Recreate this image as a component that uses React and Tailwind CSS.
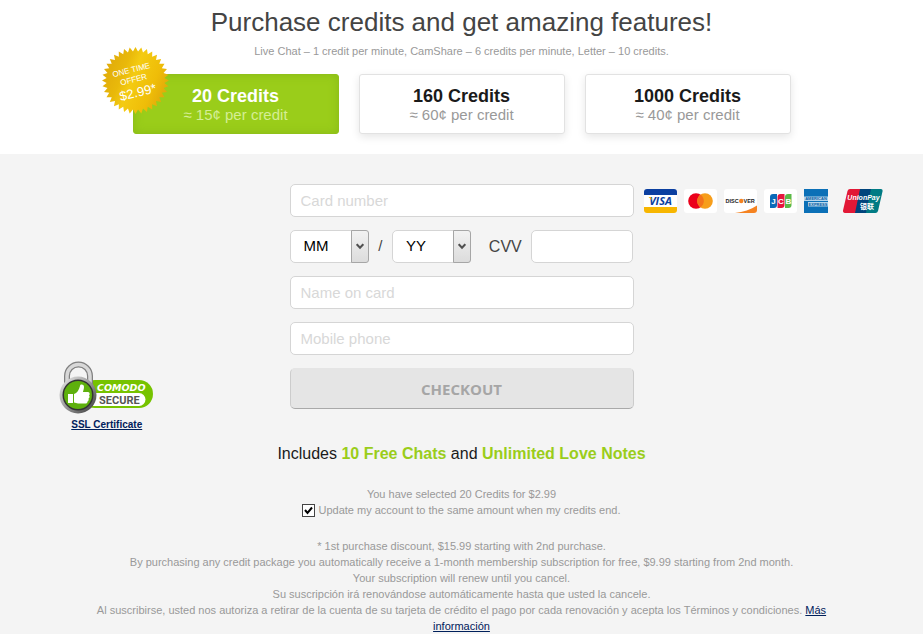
import React, { useState } from "react";

const plans = [
  { id: "20", title: "20 Credits", price: "≈ 15¢ per credit" },
  { id: "160", title: "160 Credits", price: "≈ 60¢ per credit" },
  { id: "1000", title: "1000 Credits", price: "≈ 40¢ per credit" },
];

const months = ["01", "02", "03", "04", "05", "06", "07", "08", "09", "10", "11", "12"];
const years = ["24", "25", "26", "27", "28", "29", "30"];

// serrated outline of the offer seal
const sealPoints = Array.from({ length: 72 }, (_, i) => {
  const r = i % 2 === 0 ? 33.5 : 29;
  const a = (i * Math.PI) / 36;
  return `${(33.5 + r * Math.cos(a)).toFixed(2)},${(33.5 + r * Math.sin(a)).toFixed(2)}`;
}).join(" ");

function OfferSeal() {
  return (
    <svg
      className="absolute -left-[31px] -top-[27px] h-[67px] w-[67px]"
      viewBox="0 0 67 67"
      fill="#fff"
      textAnchor="middle"
      fontFamily="'Liberation Sans', Arial, sans-serif"
    >
      <defs>
        <linearGradient id="gold" x1="0" y1="0.3" x2="1" y2="0.7">
          <stop offset="0" stopColor="#dfa90a" />
          <stop offset="0.3" stopColor="#e9b90a" />
          <stop offset="0.45" stopColor="#f4cb12" />
          <stop offset="0.75" stopColor="#efbd08" />
          <stop offset="1" stopColor="#dda50a" />
        </linearGradient>
      </defs>
      <polygon points={sealPoints} fill="url(#gold)" />
      <g transform="rotate(-14 33 34)">
        <text x="32" y="25" fontSize="8">ONE TIME</text>
        <text x="32" y="35" fontSize="8">OFFER</text>
        <text x="33" y="50" fontSize="13">$2.99*</text>
      </g>
    </svg>
  );
}

function PlanCard({ plan, selected, onSelect, children }) {
  return (
    <div className="relative flex-1">
      <button
        type="button"
        aria-pressed={selected}
        onClick={onSelect}
        className={
          selected
            ? "flex h-[60px] w-full flex-col items-center justify-center rounded-[3px] border border-[#90c11a] bg-[#9acd1a] pt-[2px] shadow-[inset_0_0_10px_#8bbd17]"
            : "flex h-[60px] w-full flex-col items-center justify-center rounded-[3px] border border-[#e2e2e2] bg-white pt-[2px] shadow-[0_3px_8px_#0000001a]"
        }
      >
        <span className={selected ? "text-[18px] leading-5 font-bold text-white" : "text-[18px] leading-5 font-bold text-[#1a1a1a]"}>
          {plan.title}
        </span>
        <span className={selected ? "text-[15px] leading-[18px] text-[#d5ee95]" : "text-[15px] leading-[18px] text-[#999]"}>
          {plan.price}
        </span>
      </button>
      {children}
    </div>
  );
}

function DateSelect({ label, short, options }) {
  return (
    <div className="relative h-[33px] w-[79px]">
      <select
        aria-label={label}
        defaultValue=""
        className="h-full w-full appearance-none rounded-[5px] border border-[#d5d5d5] bg-white pl-[13px] text-[15px] text-black"
      >
        <option value="">{short}</option>
        {options.map((o) => (
          <option key={o} value={o}>{o}</option>
        ))}
      </select>
      <span className="pointer-events-none absolute inset-y-0 right-0 flex w-[18px] items-center justify-center rounded-r-[3px] border border-[#a6a6a6] bg-linear-to-b from-[#f2f2f2] to-[#dcdcdc]">
        <svg width="8" height="7" viewBox="0 0 8 7" fill="none" stroke="#505050" strokeWidth="2">
          <path d="M.7 1.2 4 4.7 7.300 1.2" />
        </svg>
      </span>
    </div>
  );
}

function TextField({ label }) {
  return (
    <input
      type="text"
      aria-label={label}
      placeholder={label}
      className="h-[33px] w-full rounded-[5px] border border-[#d5d5d5] bg-white px-[10px] text-[15px] text-[#444] placeholder:text-[#d8d8d8]"
    />
  );
}

function CardLogos() {
  return (
    <div className="flex items-center gap-[7px]">
      <svg width="33" height="24" viewBox="0 0 33 24" role="img" aria-label="Visa">
        <rect width="33" height="24" rx="3" fill="#fff" />
        <path d="M3 0h27a3 3 0 0 1 3 3v3H0V3a3 3 0 0 1 3-3Z" fill="#0b3fa0" />
        <path d="M0 18h33v3a3 3 0 0 1-3 3H3a3 3 0 0 1-3-3Z" fill="#f7b600" />
        <text x="16.5" y="16" textAnchor="middle" fontSize="11" fontWeight="bold" fontStyle="italic" fontFamily="'Open Sans', sans-serif" fill="#0b3fa0">VISA</text>
        <path d="M4.500 8h2.500l1 3z" fill="#f7b600" />
      </svg>
      <svg width="33" height="24" viewBox="0 0 33 24" role="img" aria-label="Mastercard">
        <rect width="33" height="24" rx="3" fill="#fff" />
        <circle cx="12" cy="12" r="7.8" fill="#eb001b" />
        <circle cx="21" cy="12" r="7.8" fill="#f79e1b" />
        <path d="M16.5 5.6a7.8 7.8 0 0 1 0 12.8 7.8 7.8 0 0 1 0-12.8Z" fill="#f4731c" />
      </svg>
      <svg width="33" height="24" viewBox="0 0 33 24" role="img" aria-label="Discover">
        <rect width="33" height="24" rx="3" fill="#fff" />
        <path d="M11 24c8-1 16-3.500 22-7.500V21a3 3 0 0 1-3 3Z" fill="#f58220" />
        <g fontSize="5.500" fontWeight="bold" fontFamily="'Liberation Sans', sans-serif" fill="#222">
          <text x="1.500" y="14">DISC</text>
          <text x="19.500" y="14">VER</text>
        </g>
        <circle cx="17.200" cy="12" r="2.200" fill="#f58220" />
      </svg>
      <svg width="33" height="24" viewBox="0 0 33 24" role="img" aria-label="JCB">
        <rect width="33" height="24" rx="3" fill="#fff" />
        <path d="M9 5h4v11a3 3 0 0 1-3 3H6V8a3 3 0 0 1 3-3Z" fill="#0b6ab8" />
        <path d="M16.500 5h4v11a3 3 0 0 1-3 3h-4V8a3 3 0 0 1 3-3Z" fill="#e4173e" />
        <path d="M24 5h3.500v11a3 3 0 0 1-3 3H21V8a3 3 0 0 1 3-3Z" fill="#5bb947" />
        <g fontSize="8" fontWeight="bold" fontFamily="'Liberation Sans', sans-serif" fill="#fff" textAnchor="middle">
          <text x="9.500" y="15">J</text>
          <text x="17" y="15">C</text>
          <text x="24.500" y="15">B</text>
        </g>
      </svg>
      <svg width="24" height="24" viewBox="0 0 24 24" role="img" aria-label="American Express">
        <rect width="24" height="24" fill="#0b70b7" />
        <path d="M0 7.500h24v4.500H0zM4 13h20v4.500H4z" fill="#b5d6ec" />
        <g fontSize="4" fontWeight="bold" fontFamily="'Liberation Sans', sans-serif" fill="#0b5fa5" textAnchor="middle">
          <text x="12" y="11.200">AMERICAN</text>
          <text x="14" y="16.700">EXPRESS</text>
        </g>
      </svg>
      <svg className="ml-2" width="40" height="24" viewBox="0 0 40 24" role="img" aria-label="UnionPay">
        <path d="M7 0h12l-5 24H2a2 2 0 0 1-2-2.500L4.500 2A3 3 0 0 1 7 0Z" fill="#e21836" />
        <path d="M17 0h12l-5 24H12Z" fill="#00447c" />
        <path d="M28 0h10a2 2 0 0 1 1.500 2.500L35 22a3 3 0 0 1-2.500 2H23Z" fill="#007b84" />
        <g fill="#fff" textAnchor="middle" fontWeight="bold">
          <text x="20.500" y="11" fontSize="7" fontStyle="italic" fontFamily="'Liberation Sans', sans-serif">UnionPay</text>
          <text x="24" y="20" fontSize="7" fontFamily="'Noto Sans CJK SC', sans-serif">银联</text>
        </g>
      </svg>
    </div>
  );
}

function ComodoBadge() {
  return (
    <svg width="96" height="54" viewBox="0 0 96 54" role="img" aria-label="Comodo Secure">
      <defs>
        <linearGradient id="steel" x1="0" y1="0" x2="1" y2="1">
          <stop offset="0" stopColor="#eee" />
          <stop offset="0.5" stopColor="#999" />
          <stop offset="1" stopColor="#333" />
        </linearGradient>
      </defs>
      <rect x="22" y="19" width="72" height="28" rx="14" fill="#76c300" />
      <path d="M34 32h46a6.500 6.500 0 0 1 0 13H34Z" fill="#fff" />
      <path d="M8 26V15a11.500 11.500 0 0 1 23 0v11" fill="none" stroke="#808080" strokeWidth="6" />
      <path d="M8 26V15a11.500 11.500 0 0 1 23 0v11" fill="none" stroke="#d8d8d8" strokeWidth="3.500" />
      <circle cx="19" cy="34" r="18.500" fill="url(#steel)" />
      <circle cx="19" cy="34" r="15.500" fill="#333" />
      <circle cx="19" cy="34" r="14" fill="#5eb00c" />
      <path d="M9 33h5v9H9ZM15 33c3-1 5-4 6-8 0-2 4-2 4 1 0 2-1 4-1 5h5c2 0 2 3 1 3.500 1 1 .5 2.500-.5 3 .5 1 0 2.500-1 3 0 1.500-1 2-2 2H19l-4-1Z" fill="#fff" />
      <text x="38" y="29.500" fontSize="9.500" fontWeight="bold" fontStyle="italic" fontFamily="'DejaVu Sans', sans-serif" fill="#fff">COMODO</text>
      <text x="40" y="42.500" fontSize="11" fontWeight="bold" fontFamily="'Roboto', sans-serif" fill="#555">SECURE</text>
    </svg>
  );
}

export default function App() {
  const [selected, setSelected] = useState("20");
  const [autoUpdate, setAutoUpdate] = useState(true);

  return (
    <div className="min-h-screen bg-[#f4f4f4] font-['Liberation_Sans',Arial,sans-serif]">
      <header className="bg-white px-4 pt-[6px] pb-5 text-center">
        <h1 className="text-[26px] leading-8 text-[#444]">Purchase credits and get amazing features!</h1>
        <p className="mt-[5px] text-[11px] leading-4 text-[#999]">
          Live Chat – 1 credit per minute, CamShare – 6 credits per minute, Letter – 10 credits.
        </p>
        <div className="mx-auto mt-[15px] flex max-w-[658px] gap-5">
          {plans.map((plan) => (
            <PlanCard key={plan.id} plan={plan} selected={selected === plan.id} onSelect={() => setSelected(plan.id)}>
              {plan.id === "20" && <OfferSeal />}
            </PlanCard>
          ))}
        </div>
      </header>

      <main className="pt-[30px] pb-2">
        <div className="grid grid-cols-[1fr_344px_1fr]">
          <aside className="flex flex-col items-center pt-[177px] pr-[76px]">
            <ComodoBadge />
            <a href="#ssl" className="mt-[2px] text-[10px] leading-4 font-bold text-[#00205b] underline">SSL Certificate</a>
          </aside>

          <form className="flex flex-col gap-[13px]" onSubmit={(e) => e.preventDefault()}>
            <TextField label="Card number" />
            <div className="flex items-center justify-between">
              <DateSelect label="Expiry month" short="MM" options={months} />
              <span className="text-[15px] text-[#444]">/</span>
              <DateSelect label="Expiry year" short="YY" options={years} />
              <label htmlFor="cvv" className="ml-2 text-[16px] text-[#444]">CVV</label>
              <input
                id="cvv"
                type="text"
                className="h-[33px] w-[102px] rounded-[5px] border border-[#d5d5d5] bg-white px-[10px] text-[15px] text-[#444]"
              />
            </div>
            <TextField label="Name on card" />
            <TextField label="Mobile phone" />
            <button
              type="submit"
              className="h-[41px] rounded-[5px] border border-t-[#e5e5e5] border-x-[#ccc] border-b-[#a9a9a9] bg-[#e5e5e5] pt-[2px] font-['Open_Sans',sans-serif] text-[15px] font-bold text-[#a6a6a6]"
            >
              CHECKOUT
            </button>
          </form>

          <div className="pt-[5px] pl-[10px]">
            <CardLogos />
          </div>
        </div>

        <p className="mt-[11px] text-center text-[16px] leading-5 text-[#1a1a1a]">
          Includes <b className="text-[#9acd1a]">10 Free Chats</b> and <b className="text-[#9acd1a]">Unlimited Love Notes</b>
        </p>

        <div className="mx-auto max-w-[740px] pt-[22px] text-center text-[11px] leading-4 text-[#999]">
          <p>You have selected 20 Credits for $2.99</p>
          <label className="flex items-center justify-center gap-[3px]">
            <span className="relative flex h-[13px] w-[13px]">
              <input
                type="checkbox"
                checked={autoUpdate}
                onChange={(e) => setAutoUpdate(e.target.checked)}
                className="h-[13px] w-[13px] appearance-none border border-[#444] bg-white"
              />
              {autoUpdate && (
                <svg className="pointer-events-none absolute inset-0" viewBox="0 0 13 13" fill="none" stroke="#000" strokeWidth="2">
                  <path d="M3 6l2.500 3L10 3.500" />
                </svg>
              )}
            </span>
            Update my account to the same amount when my credits end.
          </label>
          <div className="mt-5">
            <p>* 1st purchase discount, $15.99 starting with 2nd purchase.</p>
            <p>By purchasing any credit package you automatically receive a 1-month membership subscription for free, $9.99 starting from 2nd month.</p>
            <p>Your subscription will renew until you cancel.</p>
            <p>Su suscripción irá renovándose automáticamente hasta que usted la cancele.</p>
            <p>
              Al suscribirse, usted nos autoriza a retirar de la cuenta de su tarjeta de crédito el pago por cada renovación y acepta los Términos y condiciones.{" "}
              <a href="#mas" className="text-[#00205b] underline">Más información</a>
            </p>
          </div>
        </div>
      </main>
    </div>
  );
}
